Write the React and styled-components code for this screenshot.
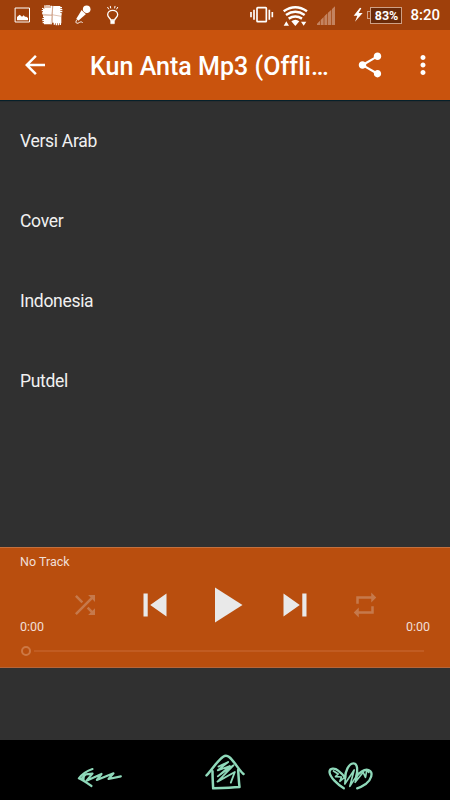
import React from "react";
import styled, { createGlobalStyle } from "styled-components";

const GlobalStyle = createGlobalStyle`
  * {
    box-sizing: border-box;
  }
  body {
    margin: 0;
    background: #303030;
    font-family: Roboto, "Noto Sans", sans-serif;
  }
`;

const Screen = styled.div`
  width: 450px;
  height: 800px;
  display: flex;
  flex-direction: column;
  overflow: hidden;
  background: #303030;
  color: #fff;
`;

const StatusBar = styled.header`
  height: 30px;
  flex: none;
  display: flex;
  justify-content: space-between;
  padding: 0 10px 0 12px;
  background: #9f400b;
`;

const StatusGroup = styled.div`
  display: flex;
  align-items: center;
`;

const StatusIcon = styled.svg`
  display: block;
  width: ${(props) => props.$width}px;
  height: 30px;
  fill: none;
  stroke: #fff;
  stroke-linecap: ${(props) => (props.$butt ? "butt" : "round")};
  stroke-linejoin: round;
`;

const Battery = styled.div`
  width: 32px;
  height: 17px;
  margin-right: 8px;
  border: 1px solid #cfa085;
  background: #6b2a08;
  font-size: 12.5px;
  font-weight: 700;
  line-height: 15px;
  letter-spacing: -0.1px;
  text-align: center;
`;

const BatteryTip = styled.div`
  width: 3px;
  height: 8px;
  border: 1px solid #cfa085;
  border-right: 0;
`;

const Clock = styled.span`
  font-size: 15px;
  font-weight: 500;
  line-height: 30px;
`;

const AppBar = styled.div`
  height: 70px;
  flex: none;
  display: flex;
  align-items: center;
  padding: 0 12.5px 0 20px;
  background: #c9530d;
  box-shadow: 0 1px 1px #06202a;
  z-index: 1;
`;

const IconButton = styled.button`
  display: flex;
  flex: none;
  align-items: center;
  justify-content: center;
  padding: 0;
  border: 0;
  background: none;
  color: ${(props) => props.$color || "#fff"};
  opacity: ${(props) => (props.$dim ? 0.28 : 1)};
`;

const Icon = styled.svg`
  display: block;
  width: ${(props) => props.$size || 30}px;
  height: ${(props) => props.$size || 30}px;
  fill: currentColor;
`;

const Title = styled.h1`
  flex: 1;
  min-width: 0;
  margin: 4px 25px 0 40px;
  font-size: 25px;
  font-weight: 500;
  line-height: 30px;
  letter-spacing: 0.03px;
  white-space: nowrap;
`;

const Actions = styled.div`
  display: flex;
  gap: 22.5px;
`;

const TrackList = styled.ul`
  flex: 1;
  margin: 0;
  padding: 0;
  list-style: none;
`;

const Track = styled.li`
  height: 80px;
  padding-left: 20px;
  color: #f1f1f1;
  font-size: 17.5px;
  letter-spacing: -0.3px;
  line-height: 82px;
`;

const Player = styled.section`
  height: 121px;
  flex: none;
  display: flex;
  flex-direction: column;
  padding: 0 20px;
  border-top: 1px solid #c4703d;
  border-bottom: 1px solid #b5653a;
  background: #b94e0e;
  color: #f0dfd6;
  font-size: 12.5px;
`;

const NowPlaying = styled.div`
  height: 27px;
  line-height: 28px;
`;

const Controls = styled.div`
  height: 60px;
  display: grid;
  grid-template-columns: repeat(5, 70px);
  justify-content: center;
`;

const Times = styled.div`
  display: flex;
  justify-content: space-between;
  height: 15px;
  margin-top: -16px;
  line-height: 15px;
`;

const Seek = styled.div`
  display: flex;
  align-items: center;
  gap: 3px;
  height: 32px;
  padding: 2px 6px 0 1px;
`;

const Thumb = styled.div`
  width: 10px;
  height: 10px;
  border: 2px solid #cd7844;
  border-radius: 50%;
`;

const Line = styled.div`
  flex: 1;
  height: 2px;
  background: #c15c22;
`;

const Gap = styled.div`
  height: 72px;
  flex: none;
`;

const NavBar = styled.nav`
  height: 60px;
  flex: none;
  display: flex;
  justify-content: center;
  background: #000;
`;

const NavIcon = styled.svg`
  display: block;
  width: 125px;
  height: 60px;
  fill: none;
  stroke: #8fd9ba;
  stroke-width: ${(props) => props.$stroke || 7};
  stroke-linecap: round;
  stroke-linejoin: round;
`;

const tracks = ["Versi Arab", "Cover", "Indonesia", "Putdel"];

const paths = {
  back: "M20 11H7.83l5.59-5.59L12 4l-8 8 8 8 1.41-1.41L7.83 13H20v-2z",
  share:
    "M18 16.08c-.76 0-1.44.3-1.96.77L8.91 12.7c.05-.23.09-.46.09-.7s-.04-.47-.09-.7l7.05-4.11c.54.5 1.25.81 2.04.81 1.66 0 3-1.34 3-3s-1.34-3-3-3-3 1.34-3 3c0 .24.04.47.09.7L8.04 9.81C7.5 9.31 6.79 9 6 9c-1.66 0-3 1.34-3 3s1.34 3 3 3c.79 0 1.5-.31 2.04-.81l7.12 4.16c-.05.21-.08.43-.08.65 0 1.61 1.31 2.92 2.92 2.92s2.92-1.31 2.92-2.92-1.31-2.92-2.92-2.92z",
  more: "M12 8c1.1 0 2-.9 2-2s-.9-2-2-2-2 .9-2 2 .9 2 2 2zm0 2c-1.1 0-2 .9-2 2s.9 2 2 2 2-.9 2-2-.9-2-2-2zm0 6c-1.1 0-2 .9-2 2s.9 2 2 2 2-.9 2-2-.9-2-2-2z",
  shuffle:
    "M10.59 9.17L5.41 4 4 5.41l5.17 5.17 1.42-1.41zM14.5 4l2.04 2.04L4 18.59 5.41 20 17.96 7.46 20 9.5V4h-5.5zm.33 9.41l-1.41 1.41 3.13 3.13L14.5 20H20v-5.5l-2.04 2.04-3.13-3.13z",
  previous: "M6 6h2.2v12H6zm3.5 6l8.5 6V6z",
  play: "M8 5v14l11-7z",
  next: "M6 18l8.5-6L6 6v12zM15.8 6v12H18V6h-2.2z",
  repeat:
    "M7 7h10v3l4-4-4-4v3H5v6h2V7zm10 10H7v-3l-4 4 4 4v-3h12v-6h-2v4z",
};

const controls = [
  { name: "shuffle", size: 30, dim: true },
  { name: "previous", size: 46 },
  { name: "play", size: 60 },
  { name: "next", size: 46 },
  { name: "repeat", size: 30, dim: true },
];

function Glyph({ name, size }) {
  return (
    <Icon viewBox="0 0 24 24" $size={size}>
      <path d={paths[name]} />
    </Icon>
  );
}

function Notifications() {
  return (
    <StatusGroup>
      {/* picture */}
      <StatusIcon $width={27} viewBox="36 0 81 90">
        <rect x="46.5" y="24" width="42" height="42" strokeWidth="3" />
        <path
          d="M51 61V51l8-7 7 6 5-4 4 4h4l5 4v7z"
          fill="#fff"
          stroke="none"
        />
      </StatusIcon>
      {/* four hands */}
      <StatusIcon $width={31} viewBox="117 0 93 90">
        <g fill="#fff" stroke="none">
          <path d="M133 26V16h4v8h2v-9h4v9h2v-9h4v9h2v-7h5v28h-28v-4h-2v-4h3v-3h-4v-4h4v-3h-3v-4z" />
          <path d="M157 18h24v3h5v4h-5v2h6v4h-6v2h6v4h-6v2h4v7h-28z" />
          <path d="M129 46h27v27h-24v-3h-4v-4h4v-2h-5v-4h5v-2h-5v-4h5v-2h-3z" />
          <path d="M157 45h27v25h-1v5h-4v-5h-2v6h-4v-6h-2v6h-4v-6h-2v4h-4v-6h-4z" />
        </g>
        <path
          d="M159 18l-4 26 29 5M130 43l26 2-3 28"
          stroke="#c58d70"
          strokeWidth="1.6"
        />
      </StatusIcon>
      {/* microphone */}
      <StatusIcon $width={30} viewBox="210 0 90 90">
        <circle cx="260" cy="28" r="11.5" fill="#fff" stroke="none" />
        <path d="M245 30l13 12-23 20-6-6z" fill="#fff" stroke="none" />
        <path d="M246 26c1 8 7 14 14 15" stroke="#9f400b" strokeWidth="1.6" />
        <path d="M230 60c-5 7-1 12 5 9s8-5 12-2" strokeWidth="3" />
      </StatusIcon>
      {/* light bulb */}
      <StatusIcon $width={24} viewBox="300 0 72 90">
        <path
          d="M332 60c0-5-9-8-9-16a15 13 0 0 1 30 0c0 8-9 11-9 16z"
          strokeWidth="4"
        />
        <path d="M333 62h10v9h-10z" fill="#fff" strokeWidth="2" />
        <path d="M331 19l1 5M345 19l-1 5M323 22l3 5M353 22l-3 5" strokeWidth="3" />
      </StatusIcon>
    </StatusGroup>
  );
}

function SystemStatus() {
  return (
    <StatusGroup>
      {/* vibrate */}
      <StatusIcon $width={32} viewBox="21 0 96 90" $butt>
        <rect x="51" y="23" width="28" height="42" rx="2" strokeWidth="5" />
        <path d="M42 29v30M88 29v30" strokeWidth="5" />
        <path d="M33 36v16M97 36v16" strokeWidth="5" />
      </StatusIcon>
      {/* wifi */}
      <StatusIcon $width={35} viewBox="117 0 105 90" $butt>
        <g strokeWidth="7.5">
          <path d="M131 34q35-24 70 0" />
          <path d="M138 45q28-19 56 0" />
          <path d="M146 56q20-13 40 0" />
        </g>
        <path
          d="M154 64q12-9 24 0l-12 14zM131 77l8-13 8 13zM183 65h16l-8 12z"
          fill="#fff"
          stroke="none"
        />
      </StatusIcon>
      {/* mobile signal */}
      <StatusIcon $width={37} viewBox="222 0 111 90">
        <path
          d="M231 75v-4l9-9v13zM242 75V60l9-9v24zM253 75V49l9-9v35zM264 75V38l10-9v46zM276 75V27l9-8v56z"
          fill="#c48360"
          stroke="none"
        />
      </StatusIcon>
      {/* charging */}
      <StatusIcon $width={16} viewBox="33 0 48 90">
        <path d="M60 23L41 47h11l-7 18 23-26H56l8-14z" fill="#fff" stroke="none" />
      </StatusIcon>
      <BatteryTip />
      <Battery>83%</Battery>
      <Clock>8:20</Clock>
    </StatusGroup>
  );
}

export default function App() {
  return (
    <>
      <GlobalStyle />
      <Screen>
        <StatusBar>
          <Notifications />
          <SystemStatus />
        </StatusBar>

        <AppBar>
          <IconButton aria-label="Back">
            <Glyph name="back" />
          </IconButton>
          <Title>Kun Anta Mp3 (Offli…</Title>
          <Actions>
            <IconButton aria-label="Share">
              <Glyph name="share" />
            </IconButton>
            <IconButton aria-label="More">
              <Glyph name="more" />
            </IconButton>
          </Actions>
        </AppBar>

        <TrackList>
          {tracks.map((track) => (
            <Track key={track}>{track}</Track>
          ))}
        </TrackList>

        <Player>
          <NowPlaying>No Track</NowPlaying>
          <Controls>
            {controls.map(({ name, size, dim }) => (
              <IconButton key={name} aria-label={name} $dim={dim} $color="#e9e9e9">
                <Glyph name={name} size={size} />
              </IconButton>
            ))}
          </Controls>
          <Times>
            <span>0:00</span>
            <span>0:00</span>
          </Times>
          <Seek>
            <Thumb />
            <Line />
          </Seek>
        </Player>
        <Gap />

        <NavBar>
          <NavIcon viewBox="-67.5 15 375 180" $stroke={6.5}>
            <path d="M96 102C81 107 63 120 55 130c12 6 26 15 38 23" />
            <path d="M63 131l13-13 20-2-18 21 45-20-14 18 50-20-15 17 37-8" />
            <path d="M70 117l-1 18" />
          </NavIcon>
          <NavIcon viewBox="-82.5 15 375 180" $stroke={7.5}>
            <path d="M48 121C64 106 79 78 98 65c6-4 13-3 18 1 17 14 27 37 43 51" />
            <path d="M66 109c0 17 1 34 2 51 26-1 53-2 79-4-2-17-3-34-4-51" />
            <path
              d="M84 95l29-14-31 25 36-13-36 31 47-33-48 49 52-29-12 32"
              strokeWidth="5.5"
            />
          </NavIcon>
          <NavIcon viewBox="-82.5 15 375 180" $stroke={7}>
            <path d="M85 160C66 148 43 127 42 111c0-12 16-13 26-4 9 7 16 14 21 21 0-17 10-43 25-43 13 0 13 23 8 40 8-11 24-24 37-20 18 7 6 31-7 41-9 6-18 11-27 14" />
            <path
              d="M54 108l14 9-8 8 18 1-5 13 17-14-2 22 28-42-13 49 25-39-9 27 24-30 7 15 4-22 6 7"
              strokeWidth="5"
            />
          </NavIcon>
        </NavBar>
      </Screen>
    </>
  );
}
